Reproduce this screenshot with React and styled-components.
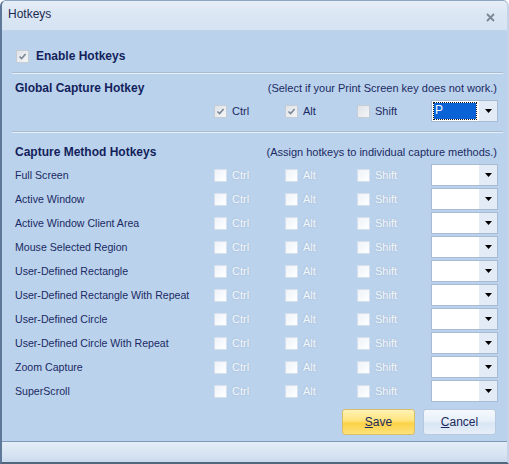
import React, { useState } from "react";
import styled, { createGlobalStyle } from "styled-components";

const GlobalStyle = createGlobalStyle`
  html, body {
    margin: 0;
    padding: 0;
    background: #ffffff;
  }
  body {
    font-family: "Liberation Sans", Arial, sans-serif;
  }
`;

const methods = [
  "Full Screen",
  "Active Window",
  "Active Window Client Area",
  "Mouse Selected Region",
  "User-Defined Rectangle",
  "User-Defined Rectangle With Repeat",
  "User-Defined Circle",
  "User-Defined Circle With Repeat",
  "Zoom Capture",
  "SuperScroll",
];

function CheckBox({ checked, disabled, label }) {
  return (
    <Check>
      <Box $disabled={disabled}>
        {checked && (
          <svg width="9" height="9" viewBox="0 0 9 9">
            <path d="M1.5 4.5 L3.6 6.6 L7.6 2" fill="none" stroke="#7b8796" strokeWidth="1.6" />
          </svg>
        )}
      </Box>
      <CheckLabel $disabled={disabled}>{label}</CheckLabel>
    </Check>
  );
}

function KeySelect({ value, focused }) {
  return (
    <Select>
      <SelectValue>{value && <Selected $focused={focused}>{value}</Selected>}</SelectValue>
      <SelectArrow>
        <svg width="7" height="4" viewBox="0 0 7 4">
          <path d="M0 0 H7 L3.5 4 Z" fill="#000" />
        </svg>
      </SelectArrow>
    </Select>
  );
}

export default function App() {
  const [enabled] = useState(true);
  return (
    <>
      <GlobalStyle />
      <Window>
        <TitleBar>
          <Title>Hotkeys</Title>
          <Close>
            <svg width="9" height="9" viewBox="0 0 9 9">
              <path d="M1 1 L8 8 M8 1 L1 8" stroke="#7c8693" strokeWidth="1.8" />
            </svg>
          </Close>
        </TitleBar>
        <Body>
          <EnableRow>
            <Box>
              {enabled && (
                <svg width="9" height="9" viewBox="0 0 9 9">
                  <path d="M1.5 4.5 L3.6 6.6 L7.6 2" fill="none" stroke="#7b8796" strokeWidth="1.6" />
                </svg>
              )}
            </Box>
            <Heading>Enable Hotkeys</Heading>
          </EnableRow>
          <Separator $top={4} />
          <SectionHeader $top={6}>
            <Heading>Global Capture Hotkey</Heading>
            <Hint>(Select if your Print Screen key does not work.)</Hint>
          </SectionHeader>
          <GlobalRow>
            <span />
            <CheckBox checked label="Ctrl" />
            <CheckBox checked label="Alt" />
            <CheckBox label="Shift" />
            <KeySelect value="P" focused />
          </GlobalRow>
          <Separator $top={9} />
          <SectionHeader $top={11}>
            <Heading>Capture Method Hotkeys</Heading>
            <Hint>(Assign hotkeys to individual capture methods.)</Hint>
          </SectionHeader>
          <Rows>
            {methods.map((m) => (
              <MethodRow key={m}>
                <MethodName>{m}</MethodName>
                <CheckBox disabled label="Ctrl" />
                <CheckBox disabled label="Alt" />
                <CheckBox disabled label="Shift" />
                <KeySelect />
              </MethodRow>
            ))}
          </Rows>
          <Buttons>
            <Button $primary>
              <u>S</u>ave
            </Button>
            <Button>
              <u>C</u>ancel
            </Button>
          </Buttons>
        </Body>
        <BottomStrip />
      </Window>
    </>
  );
}

const Window = styled.div`
  width: 509px;
  height: 464px;
  box-sizing: border-box;
  display: flex;
  flex-direction: column;
  border-left: 2px solid #5d7898;
  border-bottom: 2px solid #52667e;
  border-right: 2px solid #c4d3e6;
  border-top: 1px solid #8fa6c2;
  border-top-left-radius: 6px;
  border-top-right-radius: 6px;
  overflow: hidden;
  background: #bad2ec;
`;

const TitleBar = styled.div`
  height: 29px;
  flex: none;
  display: flex;
  align-items: center;
  justify-content: space-between;
  padding: 0 12px 0 6px;
  background: linear-gradient(#e6eef8, #dae6f4 50%, #d6e3f2);
  border-bottom: 1px solid #c3d4e8;
`;

const Title = styled.span`
  font-size: 12px;
  color: #1c2a4e;
  margin-top: -3px;
`;

const Close = styled.span`
  display: flex;
  margin-top: 4px;
`;

const Body = styled.div`
  flex: 1;
  display: flex;
  flex-direction: column;
  padding: 13px 10px 0 13px;
`;

const EnableRow = styled.div`
  height: 24px;
  display: flex;
  align-items: center;
  gap: 7px;
  padding-left: 1px;
`;

const Heading = styled.span`
  font-size: 12px;
  font-weight: bold;
  color: #131f5b;
`;

const Separator = styled.div`
  margin: ${(p) => p.$top}px -6px 0 -3px;
  border-top: 1px solid #a9bbd0;
  border-bottom: 1px solid #e8eff8;
`;

const SectionHeader = styled.div`
  margin-top: ${(p) => p.$top}px;
  height: 16px;
  display: flex;
  align-items: center;
  justify-content: space-between;
`;

const Hint = styled.span`
  font-size: 11px;
  color: #1b2a63;
`;

const grid = `
  display: grid;
  grid-template-columns: 199px 71px 72px 74px 67px;
  align-items: center;
`;

const GlobalRow = styled.div`
  ${grid}
  height: 22px;
  margin-top: 4px;
`;

const Rows = styled.div`
  margin-top: 3px;
  display: flex;
  flex-direction: column;
`;

const MethodRow = styled.div`
  ${grid}
  height: 24px;
`;

const MethodName = styled.span`
  font-size: 10.6px;
  color: #1b2a63;
  white-space: nowrap;
`;

const Check = styled.label`
  display: flex;
  align-items: center;
  gap: 5px;
`;

const Box = styled.span`
  width: 13px;
  height: 13px;
  box-sizing: border-box;
  display: flex;
  align-items: center;
  justify-content: center;
  border: 1px solid ${(p) => (p.$disabled ? "#d5e0ec" : "#c5ccd4")};
  background: ${(p) =>
    p.$disabled
      ? "linear-gradient(135deg, #eef3f9, #ffffff)"
      : "linear-gradient(135deg, #dfe3e8, #f4f5f7)"};
`;

const CheckLabel = styled.span`
  font-size: 11px;
  color: ${(p) => (p.$disabled ? "#f4f7fb" : "#1b2a63")};
  text-shadow: ${(p) => (p.$disabled ? "0 0 2px #9fb2ca" : "none")};
`;

const Select = styled.div`
  height: 22px;
  box-sizing: border-box;
  display: flex;
  border: 1px solid #a8bbd3;
  background: #ffffff;
`;

const SelectValue = styled.div`
  flex: 1;
  padding: 2px;
  display: flex;
`;

const Selected = styled.span`
  flex: 1;
  background: #0a63d6;
  color: #ffffff;
  font-size: 12px;
  line-height: 15px;
  padding-left: 1px;
  outline: ${(p) => (p.$focused ? "1px dotted #1a1a1a" : "none")};
`;

const SelectArrow = styled.div`
  width: 18px;
  display: flex;
  align-items: center;
  justify-content: center;
  background: #e3ecf6;
  border-left: 1px solid #ffffff;
`;

const Buttons = styled.div`
  margin-top: 6px;
  display: flex;
  justify-content: flex-end;
  gap: 8px;
  padding-right: 1px;
`;

const Button = styled.button`
  width: 73px;
  height: 26px;
  font-family: "Liberation Sans", Arial, sans-serif;
  font-size: 12px;
  color: #1c2a5e;
  border-radius: 3px;
  border: 1px solid ${(p) => (p.$primary ? "#d8bd6a" : "#b6c9df")};
  background: ${(p) =>
    p.$primary
      ? "linear-gradient(#fff2b6, #ffe47c 45%, #fcd247 55%, #fde27a)"
      : "linear-gradient(#f6f9fd, #e8f0f9 45%, #d9e6f4 55%, #e6eef8)"};
  u {
    text-underline-offset: 1px;
  }
`;

const BottomStrip = styled.div`
  height: 21px;
  flex: none;
  margin-top: 6px;
  border-top: 1px solid #7f98b8;
  background: linear-gradient(#e4edf8, #d6e3f2 60%, #c9d9ec);
`;
